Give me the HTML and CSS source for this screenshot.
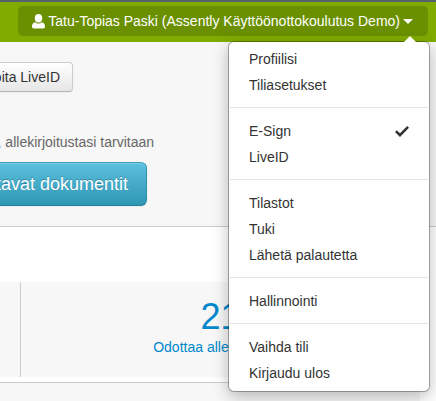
FILE: index.html
```html
<!DOCTYPE html>
<html lang="fi">
<head>
    <meta charset="UTF-8">
    <meta name="viewport" content="width=device-width, initial-scale=1.0">
    <title>E-Sign</title>
    <link rel="stylesheet" href="styles.css">
</head>
<body>
    <header class="navbar">
        <div class="account">
            <button type="button" class="account-toggle">
                <svg class="icon-user" viewBox="0 0 13 15" aria-hidden="true">
                    <ellipse cx="6.5" cy="4.3" rx="3.7" ry="4.2"/>
                    <path d="M3.2 8.2C1 8.8 0 10.200 0 12.500C0 13.700.6 14.500 1.800 14.500H11.200C12.400 14.500 13 13.700 13 12.500C13 10.200 12 8.800 9.800 8.200C8 9.900 5 9.900 3.200 8.200Z"/>
                </svg>
                <span>Tatu-Topias Paski (Assently Käyttöönottokoulutus Demo)</span>
                <span class="caret"></span>
            </button>
            <nav class="dropdown">
                <ul>
                    <li><a href="#">Profiilisi</a></li>
                    <li><a href="#">Tiliasetukset</a></li>
                </ul>
                <ul>
                    <li>
                        <a href="#">E-Sign
                            <svg class="icon-check" viewBox="0 0 14 11" aria-hidden="true">
                                <path d="M0 6L1.800 4.200L5 7.200L12.200 0L14 1.800L5 11Z"/>
                            </svg>
                        </a>
                    </li>
                    <li><a href="#">LiveID</a></li>
                </ul>
                <ul>
                    <li><a href="#">Tilastot</a></li>
                    <li><a href="#">Tuki</a></li>
                    <li><a href="#">Lähetä palautetta</a></li>
                </ul>
                <ul>
                    <li><a href="#">Hallinnointi</a></li>
                </ul>
                <ul>
                    <li><a href="#">Vaihda tili</a></li>
                    <li><a href="#">Kirjaudu ulos</a></li>
                </ul>
            </nav>
        </div>
    </header>

    <main>
        <section class="intro">
            <div class="intro-start">
                <button type="button" class="btn">oita LiveID</button>
            </div>
            <div class="intro-pending">
                <p>, allekirjoitustasi tarvitaan</p>
                <button type="button" class="btn btn-info">tavat dokumentit</button>
            </div>
        </section>

        <div class="content">
            <section class="stats">
                <div class="stat"></div>
                <a href="#" class="stat">
                    <span class="stat-number">21</span>
                    <span>Odottaa allekirjoitusta</span>
                </a>
            </section>
        </div>
    </main>
</body>
</html>
```

FILE: styles.css
```css
* {
    box-sizing: border-box;
}

body {
    display: flex;
    flex-direction: column;
    margin: 0;
    min-height: 100vh;
    overflow-x: hidden;
    font-family: "Liberation Sans", Arial, sans-serif;
    font-size: 14px;
    line-height: 20px;
    color: #333;
    background-color: #fff;
}

button {
    font: inherit;
    cursor: pointer;
}

/* Top bar */
.navbar {
    display: flex;
    justify-content: flex-end;
    height: 42px;
    padding: 4px 8px 0;
    background-color: #80ac00;
    border-top: 2px solid #56616b;
}

.account {
    position: relative;
}

.account-toggle {
    display: flex;
    align-items: center;
    height: 30px;
    padding: 0 15px 0 14px;
    color: #fff;
    white-space: nowrap;
    background-color: #6a9000;
    border: none;
    border-radius: 5px;
}

.icon-user {
    width: 13px;
    height: 15px;
    margin-right: 3px;
    fill: #fff;
}

.caret {
    margin-left: 3px;
    border-top: 5px solid #fff;
    border-left: 5px solid transparent;
    border-right: 5px solid transparent;
}

/* Account menu */
.dropdown {
    position: absolute;
    top: 35px;
    right: -2px;
    z-index: 10;
    width: 202px;
    padding: 4px 0 5px;
    background-color: #fff;
    border: 1px solid rgba(0, 0, 0, 0.3);
    border-radius: 6px;
    background-clip: padding-box;
    box-shadow: 0 5px 16px rgba(0, 0, 0, 0.25);
}

.dropdown::before {
    content: "";
    position: absolute;
    top: -6px;
    right: 13px;
    border-bottom: 6px solid #fff;
    border-left: 6px solid transparent;
    border-right: 6px solid transparent;
}

.dropdown ul {
    margin: 0 1px;
    padding: 0;
    list-style: none;
}

.dropdown ul + ul {
    margin-top: 9px;
    padding-top: 10px;
    border-top: 1px solid #e5e5e5;
}

.dropdown a {
    display: flex;
    justify-content: space-between;
    align-items: center;
    padding: 3px 19px;
    color: #333;
    text-decoration: none;
}

.icon-check {
    width: 14px;
    height: 11px;
    fill: #333;
}

/* Intro */
main {
    display: flex;
    flex: 1;
    flex-direction: column;
}

.intro {
    padding: 20px 0;
    background-color: #f7f7f7;
    border-bottom: 1px solid #ccc;
}

.intro-start,
.intro-pending {
    display: flex;
    flex-direction: column;
    align-items: flex-end;
    white-space: nowrap;
}

.intro-start {
    width: 73px;
}

.intro-pending {
    width: 154px;
    margin-top: 40px;
}

.intro-pending p {
    margin: 0 0 10px;
    color: #666;
}

.btn {
    height: 30px;
    padding: 0 12px;
    color: #333;
    background-image: linear-gradient(#fff, #e6e6e6);
    border: 1px solid #ccc;
    border-bottom-color: #b3b3b3;
    border-radius: 4px;
    box-shadow: inset 0 1px 0 rgba(255, 255, 255, 0.2), 0 1px 2px rgba(0, 0, 0, 0.05);
}

.btn-info {
    height: 44px;
    margin-right: 7px;
    padding: 0 18px;
    font-size: 18px;
    color: #fff;
    text-shadow: 0 -1px 0 rgba(0, 0, 0, 0.25);
    background-image: linear-gradient(#5bc0de, #2f96b4);
    border-color: #3f9db8 #2f8fab #23809b;
    border-radius: 6px;
}

/* Stats */
.content {
    flex: 1;
    margin-right: 16px;
    background-color: #f7f7f7;
}

.stats {
    display: grid;
    grid-template-columns: 20px 1fr;
    padding: 55px 0 5px;
    background-color: #fff;
    border-bottom: 1px solid #ccc;
}

.stat {
    display: flex;
    flex-direction: column;
    align-items: center;
    min-height: 95px;
    padding-top: 15px;
    color: #0088cc;
    text-decoration: none;
    background-color: #f7f7f7;
}

.stat + .stat {
    border-left: 1px solid #ccc;
}

.stat-number {
    font-size: 36px;
    line-height: 40px;
}
```
